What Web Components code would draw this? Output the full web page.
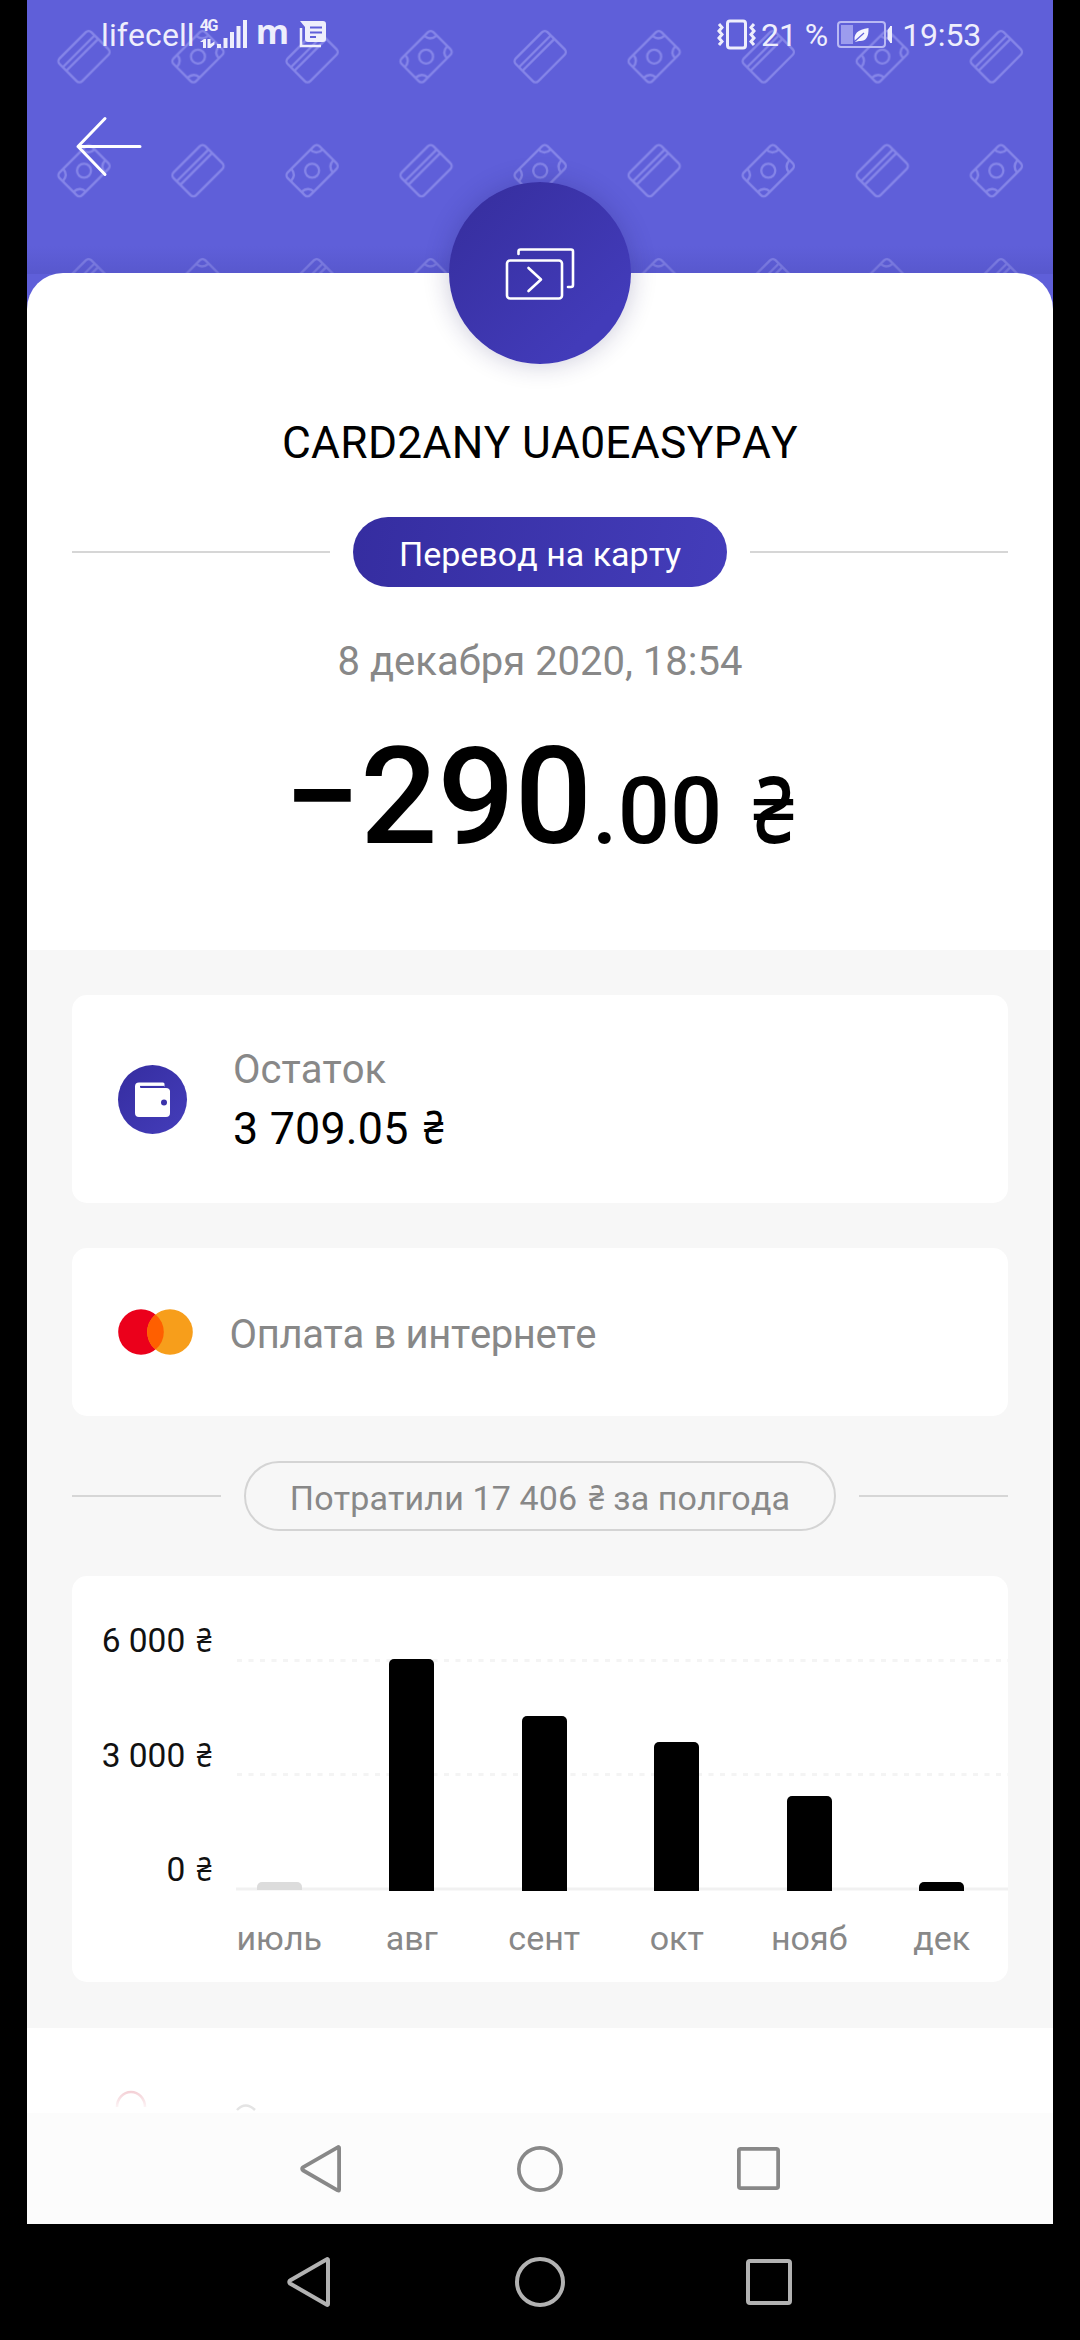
<!DOCTYPE html>
<html lang="ru">
<head>
<meta charset="utf-8">
<title>Операция</title>
<style>
    body{
        margin: 0;
        background: #000;
        width: 1080px;
        height: 2340px;
        overflow: hidden;
        font-family: Roboto, "Noto Sans", sans-serif;
        font-kerning: none;
        color: #000;
    }
</style>
</head>
<body>
<phone-screen>
    <app-header slot="header"></app-header>
    <payment-summary>
        <span slot="title">CARD2ANY UA0EASYPAY</span>
        <line-pill slot="category" filled>Перевод на карту</line-pill>
        <span slot="date">8 декабря 2020, 18:54</span>
        <span slot="sum">−290</span>
        <span slot="cents">.00 <uah-sign>₴</uah-sign></span>
    </payment-summary>
    <details-list>
        <info-card style="height: 208px">
            <wallet-icon slot="icon"></wallet-icon>
            <span slot="label">Остаток</span>
            <span slot="value">3 709.05 <uah-sign>₴</uah-sign></span>
        </info-card>
        <info-card style="height: 168px; --gap: 36.5px; --shift: 5px">
            <master-icon slot="icon"></master-icon>
            <span slot="label" style="letter-spacing: -.35px">Оплата в интернете</span>
        </info-card>
        <line-pill style="letter-spacing: .14px">Потратили 17 406 <uah-sign>₴</uah-sign> за полгода</line-pill>
        <spend-chart></spend-chart>
    </details-list>
    <next-action></next-action>
    <nav-bar slot="nav" style="height: 111px; background: #fcfcfc; color: #888; --left: 273px; --tri: 41px; --g1: 176px; --dot: 46px; --g2: 174px; --sq: 43px"></nav-bar>
</phone-screen>
<nav-bar style="height: 116px; color: #b2b2b2; --left: 287px; --tri: 43px; --g1: 185px; --dot: 50px; --g2: 181px; --sq: 46px"></nav-bar>

<script>
class BaseElement extends HTMLElement{
    constructor(){
        super();
        this.shadow = this.attachShadow({ mode: "open" });
    }
    connectedCallback(){
        this.shadow.innerHTML = this.render();
    }
}

class PhoneScreen extends BaseElement{
    render(){
        return `
            <style>
                :host{
                    display: flex;
                    flex-direction: column;
                    width: 1026px;
                    height: 2224px;
                    margin: 0 auto;
                    background: #fff;
                    overflow: hidden;
                }
                main{ flex: 1; min-height: 0; display: flex; flex-direction: column; }
            </style>
            <slot name="header"></slot>
            <main><slot></slot></main>
            <slot name="nav"></slot>
        `;
    }
}

// narrow hryvnia sign
class UahSign extends BaseElement{
    render(){
        return `
            <style>
                :host{ display: inline-block; transform: translateX(.03em) scaleX(.8); }
            </style>
            <slot></slot>
        `;
    }
}

class AppHeader extends BaseElement{
    render(){
        return `
            <style>
                :host{
                    display: block;
                    position: relative;
                    height: 273px;
                    background: #5f5fd9;
                }
                .pattern{ position: absolute; left: 0; top: 0; display: block; }
                .back{ display: block; position: relative; margin: 67px 0 0 46px; }
                .badge{
                    position: absolute;
                    left: 422px;
                    top: 182px;
                    width: 182px;
                    height: 182px;
                    border-radius: 50%;
                    background: linear-gradient(135deg, #372fa0 10%, #423bb9 80%);
                    box-shadow: 0 0 26px rgba(30, 25, 90, .24);
                    z-index: 2;
                }
            </style>
            <svg class="pattern" width="1026" height="320">
                <defs>
                    <g id="card" fill="none" stroke="#8585e8" stroke-width="2.3" transform="rotate(-45)">
                        <rect x="-22.5" y="-16" width="45" height="32" rx="4"/>
                        <path d="M-22.5 -7.5H22.5M-22.5 -2.5H22.5"/>
                    </g>
                    <g id="note" fill="none" stroke="#8585e8" stroke-width="2.3" transform="rotate(-45)">
                        <rect x="-22.5" y="-16" width="45" height="32" rx="4"/>
                        <circle r="7"/>
                        <path d="M-13.5 -16Q-14 -8 -22.5 -7.5M13.5 -16Q14 -8 22.5 -7.5M-13.5 16Q-14 8 -22.5 7.5M13.5 16Q14 8 22.5 7.5"/>
                    </g>
                    <pattern id="money" width="228.1" height="228.1" patternUnits="userSpaceOnUse">
                        <use href="#card" transform="translate(57 56.6)"/>
                        <use href="#note" transform="translate(171 56.6)"/>
                        <use href="#note" transform="translate(57 170.7)"/>
                        <use href="#card" transform="translate(171 170.7)"/>
                    </pattern>
                    <linearGradient id="shade" x1="0" y1="0" x2="0" y2="1">
                        <stop offset="0" stop-color="#4a4ab8" stop-opacity="0"/>
                        <stop offset="1" stop-color="#4a4ab8" stop-opacity=".35"/>
                    </linearGradient>
                </defs>
                <rect width="1026" height="320" fill="#5f5fd9"/>
                <rect width="1026" height="320" fill="url(#money)"/>
                <rect y="246" width="1026" height="28" fill="url(#shade)"/>
            </svg>
            <status-bar></status-bar>
            <svg class="back" width="72" height="64" fill="none" stroke="#fff" stroke-width="3" stroke-linecap="round" stroke-linejoin="round">
                <path d="M32 3.5L5 31.5L32 59.5M5 31.5H67"/>
            </svg>
            <div class="badge">
                <svg width="182" height="182" fill="none" stroke="#fff" stroke-width="2.6" stroke-linecap="round" stroke-linejoin="round">
                    <rect x="58" y="78.5" width="55" height="38" rx="3"/>
                    <path d="M69.5 72V69.5Q69.5 67.5 71.5 67.5H122Q124 67.5 124 69.5V103Q124 105 122 105H119"/>
                    <path d="M79.5 86L92 97.5L79.5 109"/>
                </svg>
            </div>
        `;
    }
}

class StatusBar extends BaseElement{
    render(){
        return `
            <style>
                :host{
                    display: flex;
                    position: relative;
                    height: 48px;
                    box-sizing: border-box;
                    padding: 11px 72px 0 74px;
                    justify-content: space-between;
                    color: #eeeefc;
                    font-size: 32px;
                    line-height: 48px;
                    white-space: nowrap;
                }
                div{ display: flex; height: 48px; align-items: flex-start; }
                svg{ display: block; flex: none; margin-top: -11px; }
                .net{ font-size: 16px; font-weight: 700; line-height: 18px; width: 18px; margin: 6px 0 0 5px; letter-spacing: -1.5px; }
                .m{ font: 700 34px/48px "Open Sans", sans-serif; margin: -4px 0 0 8px; }
            </style>
            <div>
                <span style="letter-spacing: .1px">lifecell</span>
                <span class="net">4G</span>
                <svg width="31" height="52" fill="currentColor" style="margin-left: -1px; overflow: visible">
                    <path d="M-17 42l4-3h2v9h-3v-6zM-9.5 39h3v5l4-2.5v3l-4 3.5h-3z"/>
                    <rect x="0" y="44" width="4" height="4"/>
                    <rect x="6.5" y="38" width="4" height="10"/>
                    <rect x="13" y="32" width="4" height="16"/>
                    <rect x="19.5" y="26" width="4" height="22"/>
                    <rect x="26" y="20" width="4" height="28"/>
                </svg>
                <span class="m">m</span>
                <svg width="28" height="52" style="margin-left: 10px">
                    <path d="M2 28V46H22" fill="none" stroke="currentColor" stroke-width="2.5"/>
                    <path fill="currentColor" d="M1 21H24Q27 21 27 24V39Q27 42 24 42H9Q6 42 6 39V27Z"/>
                    <path d="M11 27.5H23M11 32.5H23M11 37H17" stroke="#5f5fd9" stroke-width="2"/>
                </svg>
            </div>
            <div>
                <svg width="39" height="52" fill="none" stroke="currentColor" stroke-width="3">
                    <rect x="10.5" y="21" width="18" height="27" rx="2.5"/>
                    <path d="M2 24l3 3.5l-3 3.5l3 3.5l-3 3.5l3 3.5l-3 3.5M37 24l-3 3.5l3 3.5l-3 3.5l3 3.5l-3 3.5l3 3.5"/>
                </svg>
                <span style="margin-left: 5px">21 %</span>
                <svg width="58" height="52" style="margin-left: 9px">
                    <rect x="1" y="22" width="47" height="25" rx="3" fill="none" stroke="#b9b9f3" stroke-width="2"/>
                    <rect x="4" y="25" width="12" height="19" fill="#9c9cee"/>
                    <path fill="#f4f4ff" d="M31.5 28Q32 42 22 41L18 42Q15 30 31.5 28Z"/>
                    <path d="M17 42L27 33" stroke="#5f5fd9" stroke-width="1.2"/>
                    <path fill="currentColor" d="M50.5 30l3-4v17l-3-4zM53 26h2v17h-2z"/>
                </svg>
                <span style="margin-left: 7px; letter-spacing: -.2px">19:53</span>
            </div>
        `;
    }
}

class PaymentSummary extends BaseElement{
    render(){
        return `
            <style>
                :host{
                    display: flex;
                    flex-direction: column;
                    align-items: center;
                    flex: none;
                    height: 677px;
                    box-sizing: border-box;
                    padding: 144px 45px 0;
                    background: #fff;
                    position: relative;
                    border-radius: 36px 36px 0 0;
                    white-space: nowrap;
                }
                .title{ font-size: 44.3px; line-height: 52px; letter-spacing: .32px; }
                .category{ align-self: stretch; margin-top: 48px; }
                .date{ font-size: 40px; line-height: 48px; margin-top: 51px; color: #888; }
                .amount{ font-size: 136px; font-weight: 500; line-height: 140px; margin-top: 41px; }
                .cents{ font-size: 92px; }
                /* purple corners behind the rounded sheet */
                .corners{
                    position: absolute;
                    left: 0;
                    right: 0;
                    top: 0;
                    height: 36px;
                    z-index: -1;
                    background: #5f5fd9;
                }
            </style>
            <div class="corners"></div>
            <div class="title"><slot name="title"></slot></div>
            <div class="category"><slot name="category"></slot></div>
            <div class="date"><slot name="date"></slot></div>
            <div class="amount"><slot name="sum"></slot><span class="cents"><slot name="cents"></slot></span></div>
        `;
    }
}

class LinePill extends BaseElement{
    render(){
        const filled = this.hasAttribute("filled");
        return `
            <style>
                :host{
                    display: flex;
                    align-items: center;
                    gap: 23px;
                    height: 70px;
                    flex: none;
                }
                i{ flex: 1; height: 2px; background: #d6d6d6; }
                .pill{
                    box-sizing: border-box;
                    height: 70px;
                    padding: 5px ${filled ? 46 : 44}px 0;
                    border-radius: 35px;
                    font-size: 34px;
                    line-height: ${filled ? 64 : 60}px;
                    white-space: nowrap;
                    ${filled
                        ? "color: #fff; background: linear-gradient(100deg, #352da0, #443dba);"
                        : "color: #888; border: 2px solid #d4d4d4;"}
                }
            </style>
            <i></i>
            <div class="pill"><slot></slot></div>
            <i></i>
        `;
    }
}

class DetailsList extends BaseElement{
    render(){
        return `
            <style>
                :host{
                    display: flex;
                    flex-direction: column;
                    flex: none;
                    gap: 45px;
                    box-sizing: border-box;
                    height: 1078px;
                    padding: 45px 45px 0;
                    background: #f7f7f7;
                }
            </style>
            <slot></slot>
        `;
    }
}

class InfoCard extends BaseElement{
    render(){
        return `
            <style>
                :host{
                    display: flex;
                    align-items: center;
                    gap: var(--gap, 46px);
                    flex: none;
                    box-sizing: border-box;
                    padding-left: 46px;
                    background: #fff;
                    border-radius: 15px;
                    white-space: nowrap;
                }
                .text{ padding-top: var(--shift, 3px); display: flex; flex-direction: column; gap: 9px; }
                .label{ font-size: 40px; line-height: 48px; color: #888; }
                .value{ font-size: 44.8px; line-height: 52px; letter-spacing: .2px; }
            </style>
            <slot name="icon"></slot>
            <div class="text">
                <div class="label"><slot name="label"></slot></div>
                ${this.querySelector('[slot="value"]') ? '<div class="value"><slot name="value"></slot></div>' : ""}
            </div>
        `;
    }
}

class WalletIcon extends BaseElement{
    render(){
        return `
            <style>
                :host{ display: block; width: 69px; height: 69px; border-radius: 50%; background: linear-gradient(135deg, #352da0, #443dba); }
            </style>
            <svg width="69" height="69">
                <path fill="#fff" d="M21 17.5H45Q46.5 17.5 46.5 19V22H22.5V23H48Q52 23 52 26.5V48Q52 52 48 52H21Q17 52 17 48V21.5Q17 17.5 21 17.5Z"/>
                <path d="M22 21.7H46.5" stroke="#3b33aa" stroke-width="1.6"/>
                <circle cx="46" cy="37.5" r="3" fill="#3b33aa"/>
            </svg>
        `;
    }
}

class MasterIcon extends BaseElement{
    render(){
        return `
            <style>:host{ display: block; width: 75px; height: 46px; }</style>
            <svg width="75" height="46">
                <circle cx="23" cy="23" r="22.8" fill="#eb001b"/>
                <circle cx="52" cy="23" r="22.8" fill="#f79e1b"/>
                <path fill="#ff5f00" d="M37.5 5.4A22.8 22.8 0 0 1 37.5 40.6A22.8 22.8 0 0 1 37.5 5.4Z"/>
            </svg>
        `;
    }
}

class SpendChart extends BaseElement{
    render(){
        const months = [
            ["июль", 8, "empty"],
            ["авг", 232, ""],
            ["сент", 175, ""],
            ["окт", 149, ""],
            ["нояб", 95, ""],
            ["дек", 9, ""]
        ];
        return `
            <style>
                :host{
                    display: flex;
                    flex: none;
                    height: 406px;
                    background: #fff;
                    border-radius: 15px;
                }
                .axis{ width: 140px; padding-top: 8px; text-align: right; font-size: 33.5px; line-height: 114.6px; white-space: nowrap; color: #111; }
                .right{ flex: 1; padding-left: 1px; }
                .plot{ position: relative; margin-top: 83px; height: 232px; }
                .grid{ position: absolute; left: 23px; top: 0; }
                .row{ display: grid; grid-template-columns: repeat(6, 1fr); justify-items: center; }
                .bars{ position: relative; height: 232px; align-items: end; }
                .bar{ width: 45px; background: #000; border-radius: 5px 5px 0 0; }
                .empty{ background: #dcdcdc; margin-bottom: 1px; }
                .months{ margin-top: 27px; font-size: 34px; line-height: 40px; color: #888; }
            </style>
            <div class="axis">
                <div>6 000 <uah-sign>₴</uah-sign></div>
                <div>3 000 <uah-sign>₴</uah-sign></div>
                <div>0 <uah-sign>₴</uah-sign></div>
            </div>
            <div class="right">
                <div class="plot">
                    <svg class="grid" width="772" height="232" fill="none" stroke="#f1f1f1" stroke-width="3">
                        <path stroke="#f4f4f4" stroke-dasharray="5 6.5" d="M1 1.5H772M1 115.5H772"/>
                        <path d="M0 230H772"/>
                    </svg>
                    <div class="row bars">
                        ${months.map(m => `<div class="bar ${m[2]}" style="height: ${m[1]}px"></div>`).join("")}
                    </div>
                </div>
                <div class="row months">
                    ${months.map(m => `<div>${m[0]}</div>`).join("")}
                </div>
            </div>
        `;
    }
}

// top edge of the next block, fading out under the nav bar
class NextAction extends BaseElement{
    render(){
        return `
            <style>:host{ display: block; flex: none; height: 85px; background: #fff; }</style>
            <svg width="300" height="85" fill="none">
                <defs>
                    <linearGradient id="red" gradientUnits="userSpaceOnUse" x1="0" y1="62" x2="0" y2="80">
                        <stop offset="0" stop-color="#f3cdd3"/>
                        <stop offset="1" stop-color="#fdf6f7"/>
                    </linearGradient>
                </defs>
                <path d="M90 79A14 15 0 0 1 118 79" stroke="url(#red)" stroke-width="2.5"/>
                <path d="M210 82Q218.5 73 228 82" stroke="#e4e4e4" stroke-width="2.5"/>
            </svg>
        `;
    }
}

class NavBar extends BaseElement{
    render(){
        return `
            <style>
                :host{ display: flex; align-items: center; flex: none; box-sizing: border-box; padding-left: var(--left); }
                svg{ display: block; flex: none; overflow: visible; fill: none; stroke: currentColor; stroke-width: 4; stroke-linejoin: round; }
                .tri{ width: var(--tri); }
                .dot{ width: var(--dot); margin-left: var(--g1); }
                .sq{ width: var(--sq); margin-left: var(--g2); }
            </style>
            <svg class="tri" viewBox="0 0 43 50"><path d="M41 3V47Q41 48.5 39.5 47.5L3 26.5Q1.5 25 3 23.5L39.5 2.5Q41 1.5 41 3Z"/></svg>
            <svg class="dot" viewBox="0 0 50 50"><circle cx="25" cy="25" r="23"/></svg>
            <svg class="sq" viewBox="0 0 46 46"><rect x="2" y="2" width="42" height="42" rx="2"/></svg>
        `;
    }
}

window.customElements.define("phone-screen", PhoneScreen);
window.customElements.define("uah-sign", UahSign);
window.customElements.define("status-bar", StatusBar);
window.customElements.define("app-header", AppHeader);
window.customElements.define("payment-summary", PaymentSummary);
window.customElements.define("line-pill", LinePill);
window.customElements.define("details-list", DetailsList);
window.customElements.define("info-card", InfoCard);
window.customElements.define("wallet-icon", WalletIcon);
window.customElements.define("master-icon", MasterIcon);
window.customElements.define("spend-chart", SpendChart);
window.customElements.define("next-action", NextAction);
window.customElements.define("nav-bar", NavBar);
</script>
</body>
</html>
